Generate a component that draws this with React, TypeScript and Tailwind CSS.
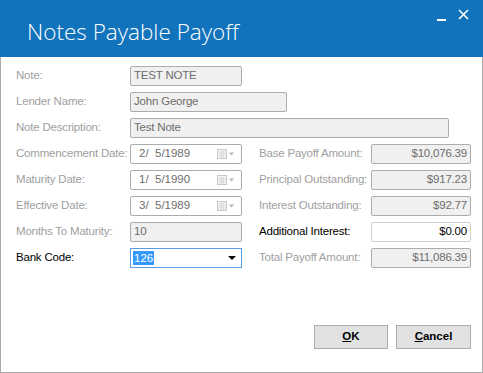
import { ReactNode } from "react";

const font = { fontFamily: "'Liberation Sans', Arial, sans-serif" };

function Label({ text, active }: { text: string; active?: boolean }) {
    return (
        <div
            className={
                "flex items-center h-[20px] text-[11.5px] tracking-[-0.2px] whitespace-nowrap " +
                (active ? "text-black" : "text-[#a0a0a0]")
            }
        >
            {text}
        </div>
    );
}

function Box({ children, className = "" }: { children?: ReactNode; className?: string }) {
    return (
        <div
            className={
                "flex items-center h-[20px] px-[3px] border border-[#acacac] rounded-[2px] bg-[#f0f0f0] text-[11.5px] tracking-[-0.2px] text-[#6d6d6d] whitespace-nowrap " +
                className
            }
        >
            {children}
        </div>
    );
}

function CalendarIcon() {
    return (
        <svg width="18" height="10" viewBox="0 0 18 10">
            <rect x="0.5" y="0.5" width="9" height="9" fill="#f4f4f4" stroke="#c8c8c8" />
            <path d="M2 3h6M2 5h6M2 7h6M4 2v7M6 2v7" stroke="#dadada" strokeWidth="1" />
            <path d="M12 3.5h5l-2.5 3z" fill="#b4b4b4" />
        </svg>
    );
}

function DateBox({ value }: { value: string }) {
    return (
        <div className="flex items-center justify-between h-[20px] w-[112px] pl-[8px] pr-[6px] border border-[#acacac] rounded-[2px] bg-white text-[11.5px] text-[#6d6d6d] whitespace-pre">
            <span>{value}</span>
            <CalendarIcon />
        </div>
    );
}

function Money({ value, editable }: { value: string; editable?: boolean }) {
    return (
        <div
            className={
                "flex items-center justify-end h-[20px] w-[100px] px-[3px] border rounded-[2px] text-[11.5px] tracking-[-0.2px] " +
                (editable
                    ? "bg-white border-[#cfcfcf] text-black"
                    : "bg-[#f0f0f0] border-[#acacac] text-[#6d6d6d]")
            }
        >
            {value}
        </div>
    );
}

function Row({ left, leftBox, right, rightBox }: { left: ReactNode; leftBox: ReactNode; right?: ReactNode; rightBox?: ReactNode }) {
    return (
        <div className="grid grid-cols-[114px_112px_17px_112px_100px] items-center">
            {left}
            {leftBox}
            <div />
            {right ?? <div />}
            {rightBox ?? <div />}
        </div>
    );
}

export default function App() {
    return (
        <div className="w-[483px] h-[373px] flex flex-col bg-white overflow-hidden" style={font}>
            <div className="h-[57px] bg-[#1173bc] flex shrink-0 relative">
                <div
                    className="pl-[27px] pt-[15px] text-[22.5px] font-light text-white"
                    style={{ fontFamily: "'Open Sans', 'Segoe UI', sans-serif" }}
                >
                    Notes Payable Payoff
                </div>
                <div className="absolute right-[14px] top-[9px] flex items-start gap-[12px]">
                    <div className="w-[9px] h-[2px] bg-white mt-[10px]" />
                    <svg width="11" height="11" viewBox="0 0 11 11">
                        <path d="M1 1L10 10M10 1L1 10" stroke="white" strokeWidth="1.6" />
                    </svg>
                </div>
            </div>

            <div className="flex-1 flex flex-col border-l border-r border-b border-[#aaaaaa] pl-[15px] pt-[9px]">
                <div className="flex flex-col gap-[6px]">
                    <div className="grid grid-cols-[114px_112px] items-center">
                        <Label text="Note:" />
                        <Box>TEST NOTE</Box>
                    </div>
                    <div className="grid grid-cols-[114px_157px] items-center">
                        <Label text="Lender Name:" />
                        <Box>John George</Box>
                    </div>
                    <div className="grid grid-cols-[114px_319px] items-center">
                        <Label text="Note Description:" />
                        <Box>Test Note</Box>
                    </div>
                    <Row
                        left={<Label text="Commencement Date:" />}
                        leftBox={<DateBox value="2/  5/1989" />}
                        right={<Label text="Base Payoff Amount:" />}
                        rightBox={<Money value="$10,076.39" />}
                    />
                    <Row
                        left={<Label text="Maturity Date:" />}
                        leftBox={<DateBox value="1/  5/1990" />}
                        right={<Label text="Principal Outstanding:" />}
                        rightBox={<Money value="$917.23" />}
                    />
                    <Row
                        left={<Label text="Effective Date:" />}
                        leftBox={<DateBox value="3/  5/1989" />}
                        right={<Label text="Interest Outstanding:" />}
                        rightBox={<Money value="$92.77" />}
                    />
                    <Row
                        left={<Label text="Months To Maturity:" />}
                        leftBox={<Box>10</Box>}
                        right={<Label text="Additional Interest:" active />}
                        rightBox={<Money value="$0.00" editable />}
                    />
                    <Row
                        left={<Label text="Bank Code:" active />}
                        leftBox={
                            <div className="flex items-center justify-between h-[20px] pl-[2px] pr-[5px] border border-[#569de5] bg-white text-[11.5px]">
                                <span className="bg-[#3399ff] text-white px-[1px] leading-[14px]">126</span>
                                <svg width="8" height="4" viewBox="0 0 8 4">
                                    <path d="M0 0h8L4 4z" fill="#000" />
                                </svg>
                            </div>
                        }
                        right={<Label text="Total Payoff Amount:" />}
                        rightBox={<Money value="$11,086.39" />}
                    />
                </div>

                <div className="flex justify-end gap-[8px] mt-[57px] pr-[11px]">
                    <button className="w-[74px] h-[24px] bg-[#e1e1e1] border border-[#adadad] text-[11.5px] font-bold text-black">
                        <span className="underline">O</span>K
                    </button>
                    <button className="w-[75px] h-[24px] bg-[#e1e1e1] border border-[#adadad] text-[11.5px] font-bold text-black">
                        <span className="underline">C</span>ancel
                    </button>
                </div>
            </div>
        </div>
    );
}
